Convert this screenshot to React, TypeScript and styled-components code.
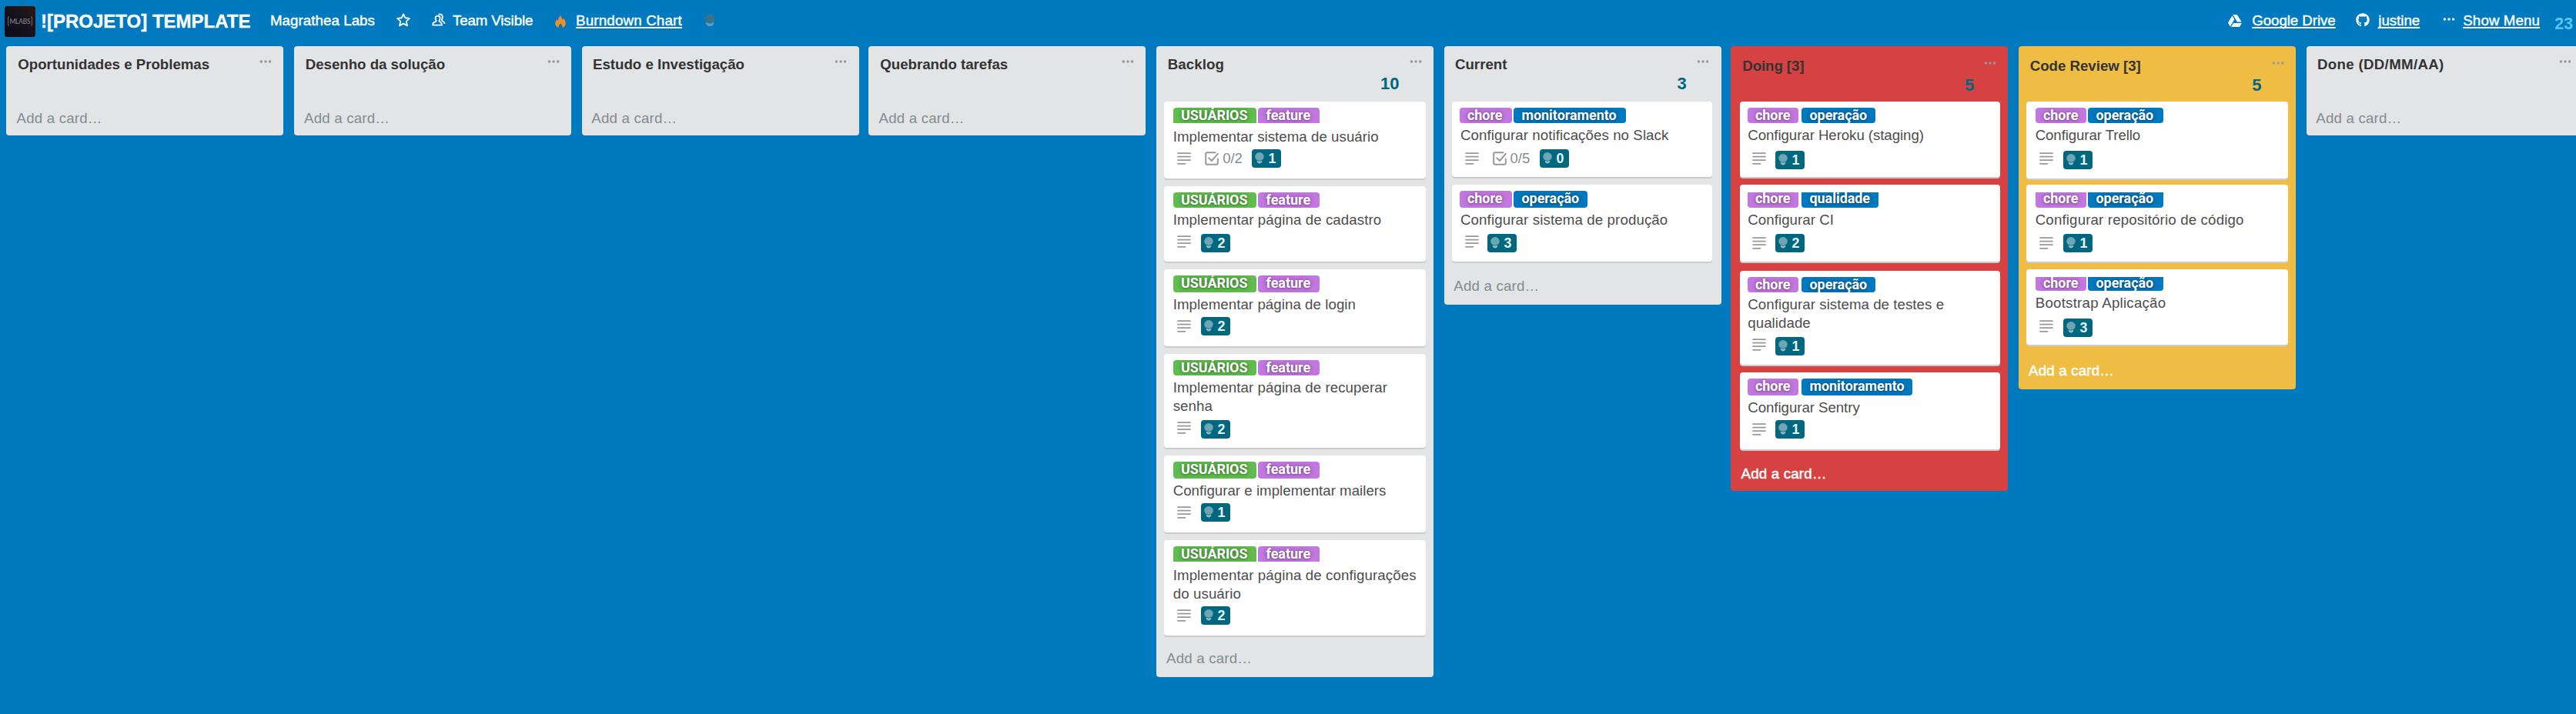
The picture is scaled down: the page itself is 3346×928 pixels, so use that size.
import React from "react";
import styled, { createGlobalStyle } from "styled-components";
import { FaGithub } from "react-icons/fa";

const GlobalStyle = createGlobalStyle`
  body {
    margin: 0;
    background: #0079bf;
    font-family: "Liberation Sans", Arial, sans-serif;
    font-size: 18.67px;
    color: #4d4d4d;
    overflow: hidden;
  }
  * { box-sizing: border-box; }
`;

const SANS = '"Liberation Sans", Arial, sans-serif';

const Page = styled.div`
  width: 3346px;
  height: 928px;
  display: flex;
  flex-direction: column;
  overflow: hidden;
  background: #0079bf;
`;

const Header = styled.header`
  height: 60px;
  flex: none;
  display: flex;
  align-items: flex-start;
  padding: 8px 4px 0 6px;
  color: #fafbfc;
`;

const Logo = styled.div`
  width: 40px;
  height: 40px;
  flex: none;
  border-radius: 4px;
  overflow: hidden;
  background: #111;
  svg { display: block; }
`;

const BoardName = styled.h1`
  margin: 6px 0 0 7px;
  width: 298px;
  flex: none;
  font: 700 24px/27px ${SANS};
  white-space: nowrap;
  -webkit-text-stroke: 0.4px currentColor;
`;

const HeaderText = styled.span<{ $width: number; $link?: boolean; $spacing?: number }>`
  width: ${(p) => p.$width}px;
  flex: none;
  margin-top: 7px;
  line-height: 24px;
  white-space: nowrap;
  letter-spacing: ${(p) => p.$spacing ?? 0}px;
  -webkit-text-stroke: 0.45px currentColor;
  text-decoration: ${(p) => (p.$link ? "underline" : "none")};
  text-decoration-thickness: 2px;
  text-underline-offset: 2px;
  text-decoration-skip-ink: none;
`;

const HeaderIcon = styled.span<{ $slot: number; $top?: number }>`
  width: ${(p) => p.$slot}px;
  flex: none;
  padding-top: ${(p) => p.$top ?? 9}px;
  line-height: 0;
`;

const Spacer = styled.div`
  flex: 1;
`;

const TotalPoints = styled.span`
  margin-top: 11px;
  font: 700 21.33px/24px ${SANS};
  color: #5ac4f6;
`;

const Lists = styled.main`
  display: flex;
  align-items: flex-start;
  padding-left: 8px;
`;

const palette = {
  grey: { bg: "#e2e4e6", add: "#838c91", stroke: "0" },
  red: { bg: "#d64242", add: "#ffffff", stroke: "0.5px" },
  yellow: { bg: "#efbd43", add: "#ffffff", stroke: "0.5px" },
};
type Tone = keyof typeof palette;

const List = styled.section<{ $tone: Tone; $gap: number }>`
  width: 360px;
  flex: none;
  margin-right: ${(p) => p.$gap}px;
  border-radius: 4px;
  background: ${(p) => palette[p.$tone].bg};
`;

const ListHead = styled.header<{ $drop: number; $shift: number }>`
  height: 72px;
  display: grid;
  grid-template-columns: 1fr ${(p) => 32 - p.$shift}px;
  grid-template-rows: 25px 26px;
  padding: ${(p) => 12 + p.$drop}px 0 0 ${(p) => 14 + p.$shift}px;
`;

const ListTitle = styled.h2<{ $spacing?: number }>`
  margin: 0;
  font: 700 18.67px/24px ${SANS};
  color: #333;
  white-space: nowrap;
  letter-spacing: ${(p) => p.$spacing ?? 0}px;
`;

const Dots = styled.svg`
  display: block;
  margin-top: 5px;
`;

const Count = styled.span`
  justify-self: end;
  margin-right: 13.2px;
  font: 700 22px/24px ${SANS};
  color: #00677f;
`;

const Cards = styled.div<{ $inset: number }>`
  padding-left: ${(p) => p.$inset}px;
  display: flex;
  flex-direction: column;
`;

const CardBox = styled.article<{ $w: number; $h: number; $after: number }>`
  width: ${(p) => p.$w}px;
  height: ${(p) => p.$h}px;
  margin-bottom: ${(p) => p.$after}px;
  border-radius: 4px;
  background: #fff;
  box-shadow: 0 2px 0 #ccc;
  display: flex;
  flex-direction: column;
`;

const Labels = styled.div<{ $pad: number; $gap: number; $top: number }>`
  display: flex;
  gap: ${(p) => p.$gap}px;
  height: ${(p) => 32 - p.$top}px;
  margin-top: ${(p) => p.$top}px;
  padding-left: ${(p) => p.$pad}px;
  flex: none;
`;

const Label = styled.span<{ $color: string; $w: number; $h: number; $cut?: "top" | "bottom"; $indent: number }>`
  width: ${(p) => p.$w}px;
  height: ${(p) => p.$h}px;
  overflow: hidden;
  border-radius: ${(p) => (p.$cut === "top" ? "0 0 4px 4px" : p.$cut === "bottom" ? "4px 4px 0 0" : "4px")};
  background: ${(p) => p.$color};
  color: #fff;
  padding-left: ${(p) => p.$indent}px;
  font: 700 17.9px/${(p) => (p.$cut === "top" ? 16 : 20)}px Roboto, ${SANS};
  text-shadow: 0 0 6px rgba(0, 0, 0, 0.35), 0 1px 3px rgba(0, 0, 0, 0.25);
  white-space: nowrap;
`;

const CardTitle = styled.p<{ $push: number; $pad: number; $rows: number; $spacing: number }>`
  margin: ${(p) => p.$push}px 0 0;
  padding-left: ${(p) => p.$pad}px;
  height: ${(p) => 24 * p.$rows}px;
  flex: none;
  line-height: 24px;
  white-space: pre;
  letter-spacing: ${(p) => p.$spacing}px;
`;

const Badges = styled.div<{ $pad: number }>`
  display: flex;
  align-items: flex-start;
  padding-left: ${(p) => p.$pad}px;
`;

const DescIcon = styled.svg<{ $top: number }>`
  flex: none;
  margin-top: ${(p) => p.$top}px;
`;

const Checklist = styled.span<{ $top: number }>`
  display: flex;
  width: 61px;
  flex: none;
  gap: 5px;
  margin: ${(p) => p.$top}px 0 0 18px;
  color: #838c91;
  font: 18.5px/18px ${SANS};
`;

const Estimate = styled.span<{ $top: number; $left: number }>`
  width: 38px;
  height: 24px;
  margin: ${(p) => p.$top}px 0 0 ${(p) => p.$left}px;
  border-radius: 4px;
  background: #00677f;
  color: #e4f6f9;
  display: flex;
  font: 700 17.8px/24px ${SANS};
  > svg { margin: 4px 5.5px 0 4px; flex: none; }
`;

const AddCard = styled.footer<{ $tone: Tone; $before: number; $h: number; $shift: number }>`
  height: ${(p) => p.$h}px;
  padding: ${(p) => p.$before}px 0 0 ${(p) => 12.3 + p.$shift}px;
  line-height: 24px;
  letter-spacing: 0.2px;
  color: ${(p) => palette[p.$tone].add};
  -webkit-text-stroke: ${(p) => palette[p.$tone].stroke} currentColor;
`;

const GREEN = "#61bd4f";
const PURPLE = "#c377e0";
const BLUE = "#0079bf";

type LabelKind = [name: string, color: string, width: number];
interface CardData {
  title: string;
  spacing: number;
  labels: LabelKind[];
  h: number;
  after: number;
  labelTop: number;
  labelH: number;
  cut?: "top" | "bottom";
  titleTop: number;
  desc: number;
  est: number;
  points: number;
  checks?: string;
}
interface ListData {
  title: string;
  spacing?: number;
  tone: Tone;
  count?: number;
  drop?: number;
  inset?: number;
  cardW?: number;
  labelPad?: number;
  labelGap?: number;
  estLeft?: number;
  add: number;
  foot: number;
  cards: CardData[];
}

const card = (
  title: string, spacing: number, labels: LabelKind[], h: number, after: number, labelTop: number, labelH: number,
  titleTop: number, desc: number, est: number, points: number, cut?: "top" | "bottom", checks?: string,
): CardData => ({ title, spacing, labels, h, after, labelTop, labelH, titleTop, desc, est, points, cut, checks });

const userFeature: LabelKind[] = [["USUÁRIOS", GREEN, 108], ["feature", PURPLE, 80]];
const chore = (w: number, name: string, w2: number): LabelKind[] => [["chore", PURPLE, w], [name, BLUE, w2]];

const empty = (title: string, spacing = 0): ListData => ({ title, spacing, tone: "grey", add: 10, foot: 44, cards: [] });

const lists: ListData[] = [
  empty("Oportunidades e Problemas"),
  empty("Desenho da solução"),
  empty("Estudo e Investigação"),
  empty("Quebrando tarefas"),
  {
    title: "Backlog", spacing: 0.12, tone: "grey", count: 10, inset: 10, cardW: 340, labelPad: 12, labelGap: 2, estLeft: 48, add: 18, foot: 54,
    cards: [
      card("Implementar sistema de usuário", 0.05, userFeature, 100, 10, 8, 20, 34, 66, 62, 1, "bottom", "0/2"),
      card("Implementar página de cadastro", 0.1, userFeature, 98, 10, 8, 20, 32, 64, 62, 2),
      card("Implementar página de login", 0.07, userFeature, 100, 10, 8, 22, 34, 66, 62, 2),
      card("Implementar página de recuperar\nsenha", 0.08, userFeature, 122, 10, 8, 20, 32, 88, 86, 2),
      card("Configurar e implementar mailers", 0.03, userFeature, 100, 10, 8, 22, 34, 66, 62, 1),
      card("Implementar página de configurações\ndo usuário", 0.11, userFeature, 124, 0, 8, 20, 34, 90, 86, 2, "bottom"),
    ],
  },
  {
    title: "Current", tone: "grey", count: 3, inset: 10, cardW: 338, labelPad: 10, labelGap: 2, estLeft: 46, add: 20, foot: 56,
    cards: [
      card("Configurar notificações no Slack", 0.09, chore(68, "monitoramento", 146), 98, 10, 8, 20, 32, 66, 62, 0, undefined, "0/5"),
      card("Configurar sistema de produção", 0.13, chore(68, "operação", 96), 100, 0, 8, 22, 34, 66, 64, 3),
    ],
  },
  {
    title: "Doing [3]", spacing: -0.08, tone: "red", count: 5, drop: 2, inset: 12, cardW: 338, labelPad: 10, labelGap: 4, estLeft: 46, add: 20, foot: 54,
    cards: [
      card("Configurar Heroku (staging)", -0.06, chore(66, "operação", 96), 98, 10, 8, 20, 32, 66, 64, 1),
      card("Configurar CI", 0.06, chore(66, "qualidade", 100), 100, 12, 10, 20, 34, 68, 64, 2, "top"),
      card("Configurar sistema de testes e\nqualidade", 0.06, chore(66, "operação", 96), 122, 10, 8, 20, 32, 88, 86, 1),
      card("Configurar Sentry", -0.05, chore(66, "monitoramento", 144), 100, 0, 8, 22, 34, 66, 62, 1),
    ],
  },
  {
    title: "Code Review [3]", tone: "yellow", count: 5, drop: 2, inset: 10, cardW: 340, labelPad: 12, labelGap: 2, estLeft: 48, add: 22, foot: 58,
    cards: [
      card("Configurar Trello", -0.09, chore(66, "operação", 98), 100, 8, 8, 20, 32, 66, 64, 1),
      card("Configurar repositório de código", 0.17, chore(66, "operação", 98), 100, 10, 10, 20, 34, 68, 64, 1, "top"),
      card("Bootstrap Aplicação", 0.25, chore(66, "operação", 98), 98, 0, 10, 18, 32, 66, 64, 3, "top"),
    ],
  },
  empty("Done (DD/MM/AA)", 0.33),
];

// Columns repeat every 373⅓px: boxes sit on whole pixels, their text keeps the fraction.
const SHIFTS = [1.3, 0.7, 0];
const GAPS = [14, 14, 12];

const Ellipsis = ({ color }: { color: string }) => (
  <Dots width="16" height="6" viewBox="0 0 16 6" fill={color}>
    <circle cx="2.4" cy="3" r="1.75" />
    <circle cx="8" cy="3" r="1.75" />
    <circle cx="13.6" cy="3" r="1.75" />
  </Dots>
);

const Bulb = () => (
  <svg width="12" height="16" viewBox="0 0 12 16" fill="#6ea5b3">
    <ellipse cx="6" cy="5.4" rx="5.8" ry="5.3" />
    <path d="M2.6 10.8Q6 12.4 9.4 10.8Q9 14.6 6 14.6Q3 14.6 2.6 10.8Z" fill="#8fbac5" />
  </svg>
);

function Card({ data, list, shift }: { data: CardData; list: ListData; shift: number }) {
  const rows = data.title.split("\n").length;
  const contentEnd = data.titleTop + rows * 24;
  const inset = list.inset!;
  const textPad = 21 + shift - inset;
  const descPad = 26.5 + shift - inset;
  return (
    <CardBox $w={list.cardW!} $h={data.h} $after={data.after}>
      <Labels $pad={list.labelPad!} $gap={list.labelGap!} $top={data.labelTop}>
        {data.labels.map(([name, color, w], i) => (
          <Label key={name} $color={color} $w={w} $h={data.labelH} $cut={data.cut} $indent={i ? 10.5 : 10}>
            {name}
          </Label>
        ))}
      </Labels>
      <CardTitle $push={data.titleTop - 32} $pad={textPad} $rows={rows} $spacing={data.spacing}>
        {data.title}
      </CardTitle>
      <Badges $pad={descPad}>
        <DescIcon width="18" height="17" viewBox="0 0 18 17" $top={data.desc - contentEnd} stroke="#999" strokeWidth="1.8" strokeLinecap="round">
          <path d="M1 1.1H17M1 5.6H17M1 10.1H17M1 14.8H10.5" />
        </DescIcon>
        {data.checks && (
          <Checklist $top={data.desc - 1 - contentEnd}>
            <svg width="18" height="18" viewBox="0 0 18 18" fill="none" stroke="#999" strokeWidth="2" strokeLinecap="round">
              <path d="M13.5 1.2H3Q1.2 1.2 1.2 3V15Q1.2 16.8 3 16.8H15Q16.8 16.8 16.8 15V9.5M5.3 8.4L9 12L16.8 2.8" />
            </svg>
            {data.checks}
          </Checklist>
        )}
        <Estimate $top={data.est - contentEnd} $left={data.checks ? (list.cardW === 340 ? -0.2 : 0.5) : list.estLeft! - descPad - 18}>
          <Bulb />
          {data.points}
        </Estimate>
      </Badges>
    </CardBox>
  );
}

export default function App() {
  return (
    <Page>
      <GlobalStyle />
      <Header>
        <Logo>
          <svg width="40" height="40" viewBox="0 0 40 40">
            <defs>
              <linearGradient id="sky" x1="0" y1="1" x2="1" y2="0">
                <stop offset="0" stopColor="#0b0b18" />
                <stop offset="0.55" stopColor="#17121c" />
                <stop offset="1" stopColor="#2c1712" />
              </linearGradient>
            </defs>
            <rect width="40" height="40" fill="url(#sky)" />
            <path d="M6 14H4.5V25H6M34 14H35.5V25H34" stroke="#66666e" fill="none" />
            <text x="6.5" y="22.5" fontSize="8.5" fontFamily="Lato, sans-serif" fill="#8f8f98" textLength="27">MLABS</text>
          </svg>
        </Logo>
        <BoardName>![PROJETO] TEMPLATE</BoardName>
        <HeaderText $width={164} $spacing={0.08}>Magrathea Labs</HeaderText>
        <HeaderIcon $slot={46}>
          <svg width="18" height="18" viewBox="0 0 18 18" fill="none" stroke="#fafbfc" strokeWidth="1.9" strokeLinejoin="round">
            <path d="M9 1.3L11.3 6.2L16.8 6.9L12.8 10.6L13.9 16.3L9 13.6L4.1 16.3L5.2 10.6L1.2 6.9L6.7 6.2Z" />
          </svg>
        </HeaderIcon>
        <HeaderIcon $slot={27}>
          <svg width="18" height="18" viewBox="0 0 18 18" fill="none" stroke="#fafbfc" strokeWidth="1.9" strokeLinejoin="round">
            <path d="M4.6 6.6A3 3 0 0 1 10.6 6.6Q10.6 8.8 9.4 10.2Q9.6 11.4 11.6 12.2Q13 13 12.9 15.6H1.2Q1 13 2.6 12.2Q5.6 11.4 5.8 10.2Q4.6 8.8 4.6 6.6Z" />
            <path d="M8.6 1.8Q13.4 .4 13.8 5Q13.8 7.4 12.8 9Q13.2 10.2 14.8 11Q16.6 12 16.4 13.8" />
          </svg>
        </HeaderIcon>
        <HeaderText $width={133} $spacing={-0.1}>Team Visible</HeaderText>
        <HeaderIcon $slot={27} $top={12}>
          <svg width="14" height="16" viewBox="0 0 14 16" fill="#ee8f2e">
            <path d="M7.2 0Q8 3.4 10 5.4Q11 4.8 11.2 3.4Q14 7.6 13.8 11Q13.4 14.6 9.6 16Q10.2 13.4 7 10.4Q4 13.4 4.6 16Q.4 14.4 .2 10.6Q.2 7.6 2.4 5Q2.6 6.4 3.6 6.8Q3.8 3 7.2 0Z" />
          </svg>
        </HeaderIcon>
        <HeaderText $width={167} $link $spacing={0.22}>Burndown Chart</HeaderText>
        <HeaderIcon $slot={14} $top={10}>
          <svg width="14" height="16" viewBox="0 0 14 16">
            <path d="M1.5 10Q7 15 12.5 10Q12 16 7 16Q2 16 1.5 10Z" fill="#5b9fc4" />
            <ellipse cx="7" cy="6.4" rx="6.4" ry="6.2" fill="#3a7389" />
          </svg>
        </HeaderIcon>
        <Spacer />
        <HeaderIcon $slot={31} $top={11}>
          <svg width="18" height="16" viewBox="0 0 18 16" fill="#fafbfc">
            <path d="M6.2 0H11.8L17.6 9.6H12ZM5.4 1.4L8.2 6.2L2.9 15.4L0 10.4ZM6.9 11H17.8L15 16H4Z" />
          </svg>
        </HeaderIcon>
        <HeaderText $width={135} $link $spacing={-0.04}>Google Drive</HeaderText>
        <HeaderIcon $slot={29}>
          <FaGithub size={18} />
        </HeaderIcon>
        <HeaderText $width={84} $link>justine</HeaderText>
        <HeaderIcon $slot={26}><Ellipsis color="#fafbfc" /></HeaderIcon>
        <HeaderText $width={119} $link $spacing={0.15}>Show Menu</HeaderText>
        <TotalPoints>23</TotalPoints>
      </Header>
      <Lists>
        {lists.map((list, i) => {
          const shift = SHIFTS[i % 3];
          return (
            <List key={list.title} $tone={list.tone} $gap={GAPS[i % 3]}>
              <ListHead $drop={list.drop ?? 0} $shift={shift}>
                <ListTitle $spacing={list.spacing}>{list.title}</ListTitle>
                <Ellipsis color="#999" />
                {list.count !== undefined && <Count>{list.count}</Count>}
              </ListHead>
              {list.cards.length > 0 && (
                <Cards $inset={list.inset!}>
                  {list.cards.map((c) => <Card key={c.title} data={c} list={list} shift={shift} />)}
                </Cards>
              )}
              <AddCard $tone={list.tone} $before={list.add} $h={list.foot} $shift={shift}>Add a card…</AddCard>
            </List>
          );
        })}
      </Lists>
    </Page>
  );
}
